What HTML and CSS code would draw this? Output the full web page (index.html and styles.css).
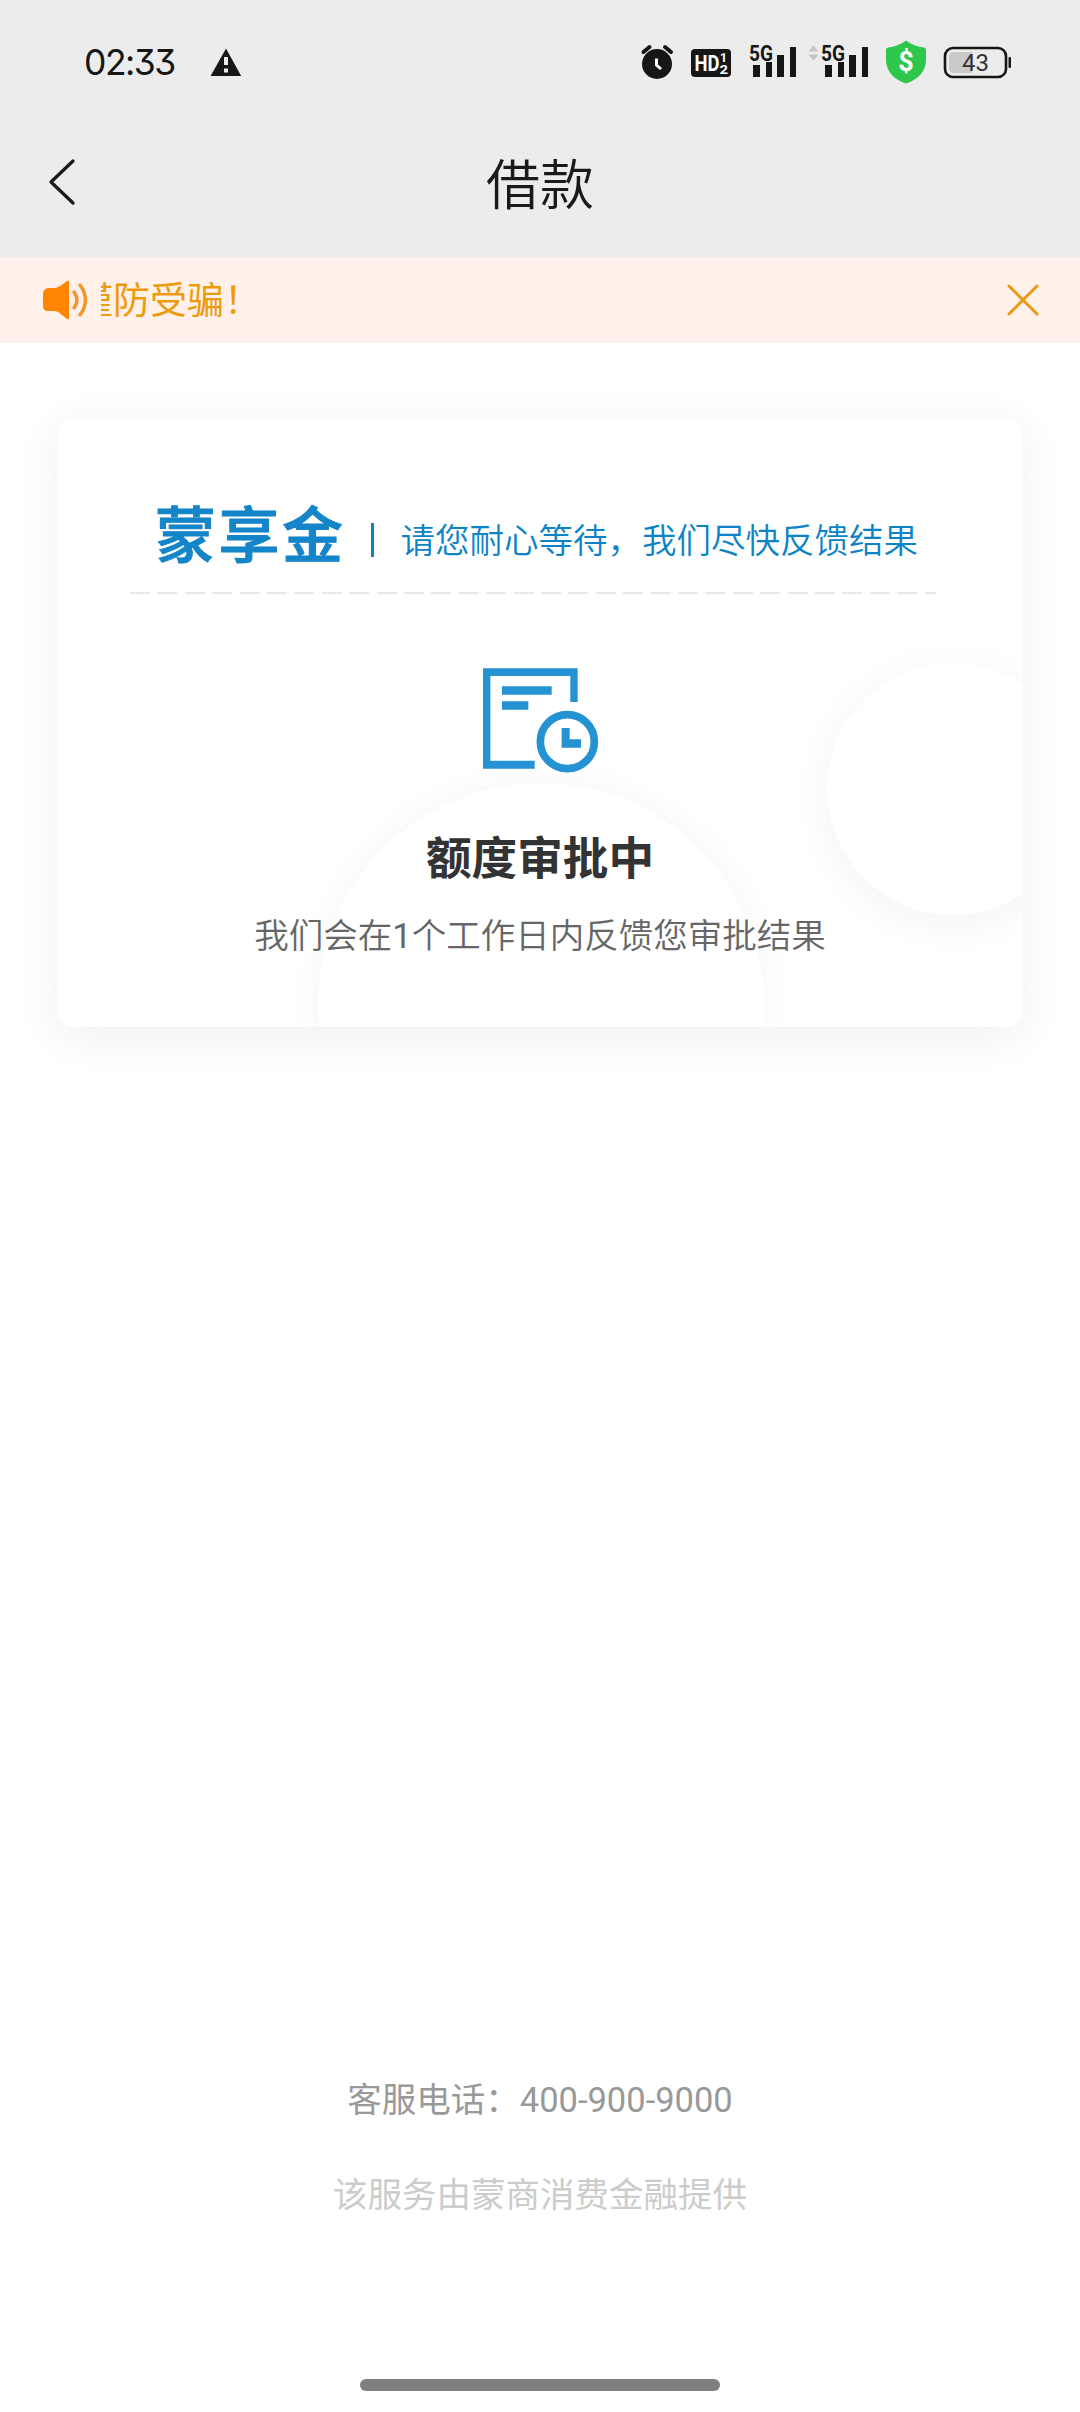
FILE: index.html
```html
<!DOCTYPE html>
<html lang="zh-CN">
<head>
<meta charset="utf-8">
<title>借款</title>
<link rel="stylesheet" href="styles.css">
</head>
<body>
<div class="screen">
  <header class="top">
    <div class="status">
      <span class="time">02:33</span>
      <svg class="warn" width="32" height="28" viewBox="0 0 32 28"><path d="M16 0.5 31.2 28H0.6Z" fill="#161616"/><path d="M14 9h4v8h-4zM14 20.500h4v4h-4z" fill="#ececec"/></svg>
      <svg class="indicators" width="380" height="60" viewBox="640 30 380 60">
        <g fill="#161616">
          <circle cx="657" cy="64" r="15"/>
          <path d="M643.500 52 649.500 47M671 52 665 47" stroke="#161616" stroke-width="4" stroke-linecap="round"/>
          <rect x="691" y="49" width="40" height="28" rx="4"/>
          <path d="M753 65h7v12h-7zM766 62h6v15h-6zM777 55h7v22h-7zM790 47h6v30h-6z"/>
          <path d="M825 65h7v12h-7zM838 62h6v15h-6zM849 55h7v22h-7zM862 47h6v30h-6z"/>
          <rect x="1008.500" y="57" width="2.500" height="11" rx="1"/>
        </g>
        <path d="M656.500 58.500V65L661 69" fill="none" stroke="#fff" stroke-width="3"/>
        <g class="hd"><text x="694.500" y="71" font-size="22" textLength="25" lengthAdjust="spacingAndGlyphs">HD</text><text x="720" y="62" font-size="13" textLength="7" lengthAdjust="spacingAndGlyphs">1</text><text x="719.500" y="74" font-size="13" textLength="8.500" lengthAdjust="spacingAndGlyphs">2</text></g>
        <g class="net"><text x="749" y="60.500" textLength="24" lengthAdjust="spacingAndGlyphs">5G</text><text x="821" y="60.500" textLength="24" lengthAdjust="spacingAndGlyphs">5G</text></g>
        <path d="M808.500 51.500 813.500 45.500 818.500 51.500ZM808.500 54.500H818.500L813.500 60.500Z" fill="#c4c4c4"/>
        <path d="M906 40.500C911 44.500 918 47 924 47.500Q926 48 926 50V60C926 72 917 80 906 83.500C895 80 886 72 886 60V50Q886 48 888 47.500C894 47 901 44.500 906 40.500Z" fill="#2fc64c"/>
        <text class="dollar" x="906" y="70.500">$</text>
        <rect x="945" y="48" width="61" height="29" rx="8" fill="none" stroke="#161616" stroke-width="2.600"/>
        <path d="M972 52H954Q949 52 949 57V68Q949 73 954 73H972Z" fill="#cacaca"/>
        <text class="level" x="975.500" y="71">43</text>
      </svg>
    </div>
    <div class="nav">
      <svg class="back" width="28" height="48" viewBox="0 0 28 48"><path d="M25 3 3 24 25 45" fill="none" stroke="#1a1a1a" stroke-width="3.300" stroke-linecap="round" stroke-linejoin="round"/></svg>
      <h1 class="title">借款</h1>
    </div>
  </header>

  <div class="notice">
    <svg class="speaker" width="45" height="40" viewBox="0 0 45 40"><path d="M0 14Q0 9 5 8H11Q15 8 20 4L24 1Q26 0 26 2V38Q26 40 24 39L19 35Q15 31 11 31H5Q0 31 0 26Z" fill="#ff8503"/><path d="M31 12Q37 20 31 28M37 5Q48 20 37 35" fill="none" stroke="#f5942c" stroke-width="3.400" stroke-linecap="round"/></svg>
    <div class="marquee"><span>谨防受骗！</span></div>
    <svg class="close" width="32" height="32" viewBox="0 0 32 32"><path d="M2 2 30 30M30 2 2 30" stroke="#e99a12" stroke-width="3" stroke-linecap="round"/></svg>
  </div>

  <main class="card">
    <div class="brand-row">
      <span class="brand">蒙享金</span>
      <i class="bar"></i>
      <span class="slogan">请您耐心等待，我们尽快反馈结果</span>
    </div>
    <div class="dashes"></div>
    <svg class="doc" width="116" height="106" viewBox="129 83 348 318"><g fill="#2592d3"><path d="M129 84H413V185H391V107H151V361H284V385H129ZM186 138H335V163H186ZM186 183H265V208H186ZM365 263H389V297H423V322H365Z"/></g><circle cx="382" cy="304" r="81" fill="none" stroke="#2592d3" stroke-width="23"/></svg>
    <h2 class="state">额度审批中</h2>
    <p class="hint">我们会在<span class="days">1</span>个工作日内反馈您审批结果</p>
    <div class="orb orb-large"></div>
    <div class="orb orb-small"></div>
  </main>

  <footer class="foot">
    <p class="tel">客服电话：400-900-9000</p>
    <p class="provider">该服务由蒙商消费金融提供</p>
    <div class="home"></div>
  </footer>
</div>
</body>
</html>
```
FILE: styles.css
```css
* { box-sizing: border-box; margin: 0; padding: 0; }
body { background: #fff; font-family: Roboto, "Noto Sans CJK SC", sans-serif; }
.screen { width: 1080px; height: 2412px; display: flex; flex-direction: column; overflow: hidden; }

.top { height: 257px; background: #ececec; flex: none; }
.status { height: 120px; padding: 30px 60px 30px 84px; display: flex; align-items: center; }
.time { width: 126px; font: 400 35.5px/60px Inter, sans-serif; font-feature-settings: "cv09"; letter-spacing: -1.5px; color: #161616; padding-top: 6px; }
.warn { margin-top: 4px; }
.indicators { margin-left: auto; }
.hd { fill: #fff; font-family: Roboto, sans-serif; font-weight: 700; }
.net { fill: #161616; font: 700 21.5px Roboto, sans-serif; paint-order: stroke; stroke: #ececec; stroke-width: 2px; }
.dollar { fill: #fff; font: 700 27px Roboto, sans-serif; text-anchor: middle; }
.level { fill: #333; font: 400 24px Roboto, sans-serif; text-anchor: middle; }

.nav { height: 137px; display: grid; grid-template-columns: 80px 1fr 80px; align-items: start; }
.back { margin: 38px 0 0 48px; }
.title { font-size: 54px; line-height: 80px; font-weight: 350; color: #1a1a1a; text-align: center; padding-top: 27px; }

.notice { height: 86px; flex: none; background: #fff1ea; display: flex; align-items: center; padding: 0 41px 0 43px; }
.marquee { flex: 1; margin: 0 40px 0 13px; padding-top: 4px; overflow: hidden; color: #eb9b0c; font-size: 37px; line-height: 54px; font-weight: 400; white-space: nowrap; }
.marquee span { display: block; margin-left: -25px; }

.card { position: relative; flex: none; width: 966px; height: 607px; margin: 77px 57px 0; border-radius: 18px; background: #fff; box-shadow: 0 8px 46px rgba(20, 40, 40, .07); overflow: hidden; display: flex; flex-direction: column; align-items: center; }
.brand-row { width: 100%; height: 172px; padding: 62px 0 0 98px; display: flex; align-items: center; z-index: 1; color: #0b83c6; }
.brand { font-size: 61px; line-height: 80px; font-weight: 500; letter-spacing: 2.500px; white-space: nowrap; color: #1485c9; -webkit-text-stroke: 1px #1485c9; }
.bar { width: 3px; height: 34px; margin: 6px 0 0 25px; background: #0b83c6; }
.slogan { margin: 8px 0 0 27px; font-size: 34.5px; line-height: 50px; font-weight: 350; white-space: nowrap; }
.dashes { width: 806px; height: 2px; margin-right: 14px; background: repeating-linear-gradient(90deg, #e6e9e9 0 20px, transparent 20px 27.4px); z-index: 1; }
.doc { margin: 74px 0 0 2px; z-index: 1; }
.state { margin-top: 53px; font-size: 45.6px; line-height: 66px; font-weight: 700; color: #333; z-index: 1; }
.hint { margin-top: 18px; font-size: 34.5px; line-height: 50px; font-weight: 350; color: #666; z-index: 1; }
.days { font-weight: 400; }
.orb { position: absolute; border-radius: 50%; background: #fff; box-shadow: 0 0 36px rgba(20, 40, 40, .04); }
.orb-large { left: 261px; top: 363px; width: 446px; height: 446px; }
.orb-small { left: 770px; top: 243px; width: 252px; height: 252px; box-shadow: 0 8px 40px rgba(20, 40, 40, .05); }

.foot { margin-top: auto; display: flex; flex-direction: column; align-items: center; font-size: 34.5px; line-height: 50px; padding-bottom: 21px; }
.tel { color: #999; }
.provider { color: #ccc; margin-top: 45px; }
.home { width: 360px; height: 12px; border-radius: 6px; background: #808080; margin-top: 159px; }
```
